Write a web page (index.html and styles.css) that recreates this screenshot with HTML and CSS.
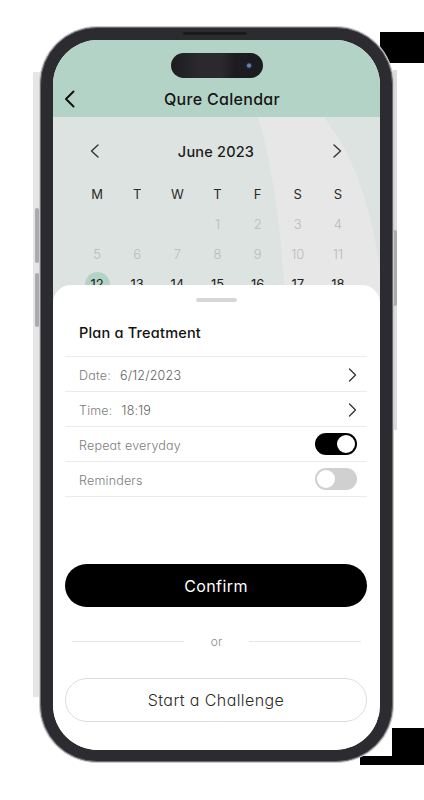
FILE: index.html
```html
<!DOCTYPE html>
<html lang="en">
<head>
<meta charset="utf-8">
<title>Qure Calendar</title>
<link rel="stylesheet" href="styles.css">
</head>
<body>
<div class="stage">
  <div class="deco deco-tr"></div>
  <div class="deco deco-br"></div>
  <div class="deco deco-br2"></div>
  <div class="deco side-left"></div>
  <div class="deco side-right"></div>
  <div class="deco hw-btn vol1"></div>
  <div class="deco hw-btn vol2"></div>
  <div class="deco hw-btn power"></div>

  <div class="phone">
    <div class="speaker"></div>
    <div class="screen">
      <header class="topbar">
        <div class="island"><span class="cam"></span></div>
        <div class="titlebar">
          <svg class="back" width="11" height="18" viewBox="0 0 11 18"><path d="M9.5 1.5 L2 9 L9.5 16.5" fill="none" stroke="#111" stroke-width="2" stroke-linecap="round" stroke-linejoin="round"/></svg>
          <h1>Qure Calendar</h1>
          <span></span>
        </div>
      </header>

      <section class="calendar">
        <svg class="cal-bg" width="329" height="185" viewBox="0 0 329 185">
          <path d="M205 0 Q226 70 232 185 L329 185 L329 170 Q318 60 271 0 Z" fill="#e6e7e6"/>
        </svg>
        <div class="month-nav">
          <svg width="9" height="14" viewBox="0 0 9 14"><path d="M8 1 L1.5 7 L8 13" fill="none" stroke="#333" stroke-width="1.4" stroke-linecap="round" stroke-linejoin="round"/></svg>
          <span class="month">June 2023</span>
          <svg width="9" height="14" viewBox="0 0 9 14"><path d="M1 1 L7.5 7 L1 13" fill="none" stroke="#333" stroke-width="1.4" stroke-linecap="round" stroke-linejoin="round"/></svg>
        </div>
        <div class="grid">
          <span class="wd">M</span><span class="wd">T</span><span class="wd">W</span><span class="wd">T</span><span class="wd">F</span><span class="wd">S</span><span class="wd">S</span>
          <span></span><span></span><span></span><span class="dim">1</span><span class="dim">2</span><span class="dim">3</span><span class="dim">4</span>
          <span class="dim">5</span><span class="dim">6</span><span class="dim">7</span><span class="dim">8</span><span class="dim">9</span><span class="dim">10</span><span class="dim">11</span>
          <span class="day sel"><i>12</i></span><span class="day">13</span><span class="day">14</span><span class="day">15</span><span class="day">16</span><span class="day">17</span><span class="day">18</span>
        </div>
      </section>

      <section class="sheet">
        <div class="handle"></div>
        <h2 class="sheet-title">Plan a Treatment</h2>
        <div class="row">
          <span class="label">Date:</span><span class="value">6/12/2023</span>
          <svg class="chev" width="9" height="14" viewBox="0 0 9 14"><path d="M1.5 1 L7.5 7 L1.5 13" fill="none" stroke="#333" stroke-width="1.3" stroke-linecap="round" stroke-linejoin="round"/></svg>
        </div>
        <div class="row">
          <span class="label">Time:</span><span class="value">18:19</span>
          <svg class="chev" width="9" height="14" viewBox="0 0 9 14"><path d="M1.5 1 L7.5 7 L1.5 13" fill="none" stroke="#333" stroke-width="1.3" stroke-linecap="round" stroke-linejoin="round"/></svg>
        </div>
        <div class="row">
          <span class="label">Repeat everyday</span>
          <span class="toggle on"><b></b></span>
        </div>
        <div class="row">
          <span class="label">Reminders</span>
          <span class="toggle"><b></b></span>
        </div>

        <button class="btn-primary">Confirm</button>
        <div class="or"><span class="line"></span><span class="or-text">or</span><span class="line"></span></div>
        <button class="btn-outline">Start a Challenge</button>
      </section>
    </div>
  </div>
</div>
</body>
</html>
```

FILE: styles.css
```css
* { box-sizing: border-box; }
html, body { margin: 0; padding: 0; background: #fff; }
body {
  font-family: Inter, "Open Sans", Roboto, sans-serif;
  font-feature-settings: "cv11" 1;
  color: #111;
}

.stage {
  position: relative;
  width: 424px;
  height: 800px;
  padding: 27px 0 0 40px;
  overflow: hidden;
  background: #fff;
}

/* mockup artefacts around the device */
.deco { position: absolute; }
.deco-tr { left: 380px; top: 32px; width: 44px; height: 31px; background: #000; }
.deco-br { left: 392px; top: 728px; width: 32px; height: 37px; background: #000; }
.deco-br2 { left: 360px; top: 756px; width: 64px; height: 9px; background: #000; }
.side-left { left: 33px; top: 72px; width: 7px; height: 625px; background: #e6e6e6; }
.side-right { left: 393px; top: 70px; width: 4px; height: 360px; background: #dcdcde; }
.hw-btn { background: #ababaf; border-radius: 2px; }
.vol1 { left: 35px; top: 208px; width: 4px; height: 55px; }
.vol2 { left: 35px; top: 273px; width: 4px; height: 54px; }
.power { left: 393px; top: 230px; width: 4px; height: 76px; }

.phone {
  position: relative;
  z-index: 1;
  width: 353px;
  height: 735px;
  padding: 12px 12px 11px 12px;
  border-radius: 57px;
  background: #2c2b30;
  border: 1.5px solid #6d6c72;
  box-shadow: 0 0 0 1px #c9c9cc;
}
.speaker {
  position: absolute;
  left: 142px;
  top: 4px;
  width: 64px;
  height: 3px;
  border-radius: 2px;
  background: #1a1a1d;
}

.screen {
  height: 100%;
  border-radius: 45px;
  overflow: hidden;
  background: #fff;
  display: flex;
  flex-direction: column;
}

/* header */
.topbar {
  height: 77px;
  flex: none;
  background: #b4d3c7;
  padding-top: 13px;
}
.island {
  width: 92px;
  height: 25px;
  margin: 0 auto;
  border-radius: 13px;
  background: linear-gradient(90deg, #1c1b1f 0%, #2a292e 30%, #2a292e 55%, #1c1b1f 70%);
  display: flex;
  justify-content: flex-end;
  align-items: center;
  padding-right: 10px;
}
.cam {
  width: 8px;
  height: 8px;
  border-radius: 50%;
  background: radial-gradient(circle at 50% 45%, #6d7fa8 0 25%, #20283c 45%, #0e0f14 100%);
}
.titlebar {
  height: 30px;
  margin-top: 6px;
  display: grid;
  grid-template-columns: 1fr auto 1fr;
  align-items: center;
  padding-left: 11px;
}
.titlebar h1 {
  margin: 0;
  font-size: 16px;
  font-weight: 500;
  letter-spacing: 0.3px;
  color: #161616;
}

/* calendar */
.calendar {
  position: relative;
  height: 185px;
  flex: none;
  background: #dce3e0;
  overflow: hidden;
}
.cal-bg { position: absolute; left: 0; top: 0; }
.month-nav {
  position: relative;
  margin-top: 22px;
  height: 24px;
  padding: 0 38px 0 37px;
  display: flex;
  align-items: center;
  justify-content: space-between;
}
.month {
  font-size: 14.5px;
  font-weight: 500;
  color: #1c1c1c;
  letter-spacing: 0.2px;
}
.grid {
  position: relative;
  margin-top: 16px;
  padding: 0 22px 0 24px;
  display: grid;
  grid-template-columns: repeat(7, 1fr);
  grid-auto-rows: 30px;
  align-items: center;
  justify-items: center;
  font-size: 13px;
  font-weight: 300;
}
.wd { color: #2a2a2a; font-size: 13px; font-weight: 400; }
.dim { color: #b9bcba; }
.day { color: #222; font-weight: 400; }
.sel i {
  font-style: normal;
  display: flex;
  width: 25px;
  height: 25px;
  border-radius: 50%;
  background: #b4d3c7;
  align-items: center;
  justify-content: center;
}

/* bottom sheet */
.sheet {
  position: relative;
  z-index: 2;
  flex: 1;
  margin-top: -17px;
  background: #fff;
  border-radius: 18px 18px 0 0;
  padding: 13px 13px 0 12px;
  display: flex;
  flex-direction: column;
}
.handle {
  width: 41px;
  height: 4px;
  border-radius: 3px;
  background: #d7d7d7;
  margin: 0 auto;
  flex: none;
}
.sheet-title {
  margin: 0;
  height: 55px;
  padding: 21px 14px 0;
  font-size: 14.5px;
  line-height: 20px;
  font-weight: 500;
  letter-spacing: 0.2px;
  color: #111;
  border-bottom: 1px solid #ebebeb;
}
.row {
  height: 35px;
  flex: none;
  display: flex;
  align-items: center;
  padding: 0 10px 0 14px;
  border-bottom: 1px solid #ebebeb;
  font-size: 12.5px;
  font-weight: 300;
  letter-spacing: 0.2px;
}
.label, .value { padding-top: 3px; }
.label { color: #7c7c7c; }
.value { color: #606060; margin-left: 9px; }
.chev { margin-left: auto; margin-top: 2px; }
.toggle {
  margin-left: auto;
  width: 42px;
  height: 22px;
  border-radius: 11px;
  background: #d0d0d0;
  display: flex;
  align-items: center;
  padding: 0 2px;
}
.toggle b {
  width: 18px;
  height: 18px;
  border-radius: 50%;
  background: #fff;
}
.toggle.on { background: #000; justify-content: flex-end; }

.btn-primary, .btn-outline {
  font-family: inherit;
  font-feature-settings: "cv11" 1;
  width: 100%;
  border-radius: 22px;
  font-size: 16px;
  letter-spacing: 0.4px;
  cursor: pointer;
}
.btn-primary {
  margin-top: 67px;
  height: 43px;
  border: none;
  background: #000;
  color: #fff;
}
.or {
  margin-top: 24px;
  height: 20px;
  display: flex;
  align-items: center;
  padding: 0 6px 0 7px;
}
.line { flex: 1; height: 1px; background: #e6e6e6; }
.or-text { margin: 0 27px; font-size: 12px; color: #8c8c8c; font-weight: 300; }
.btn-outline {
  margin-top: 27px;
  height: 44px;
  background: #fff;
  border: 1px solid #dcdcdc;
  color: #2a2a2a;
  font-weight: 300;
}
```
